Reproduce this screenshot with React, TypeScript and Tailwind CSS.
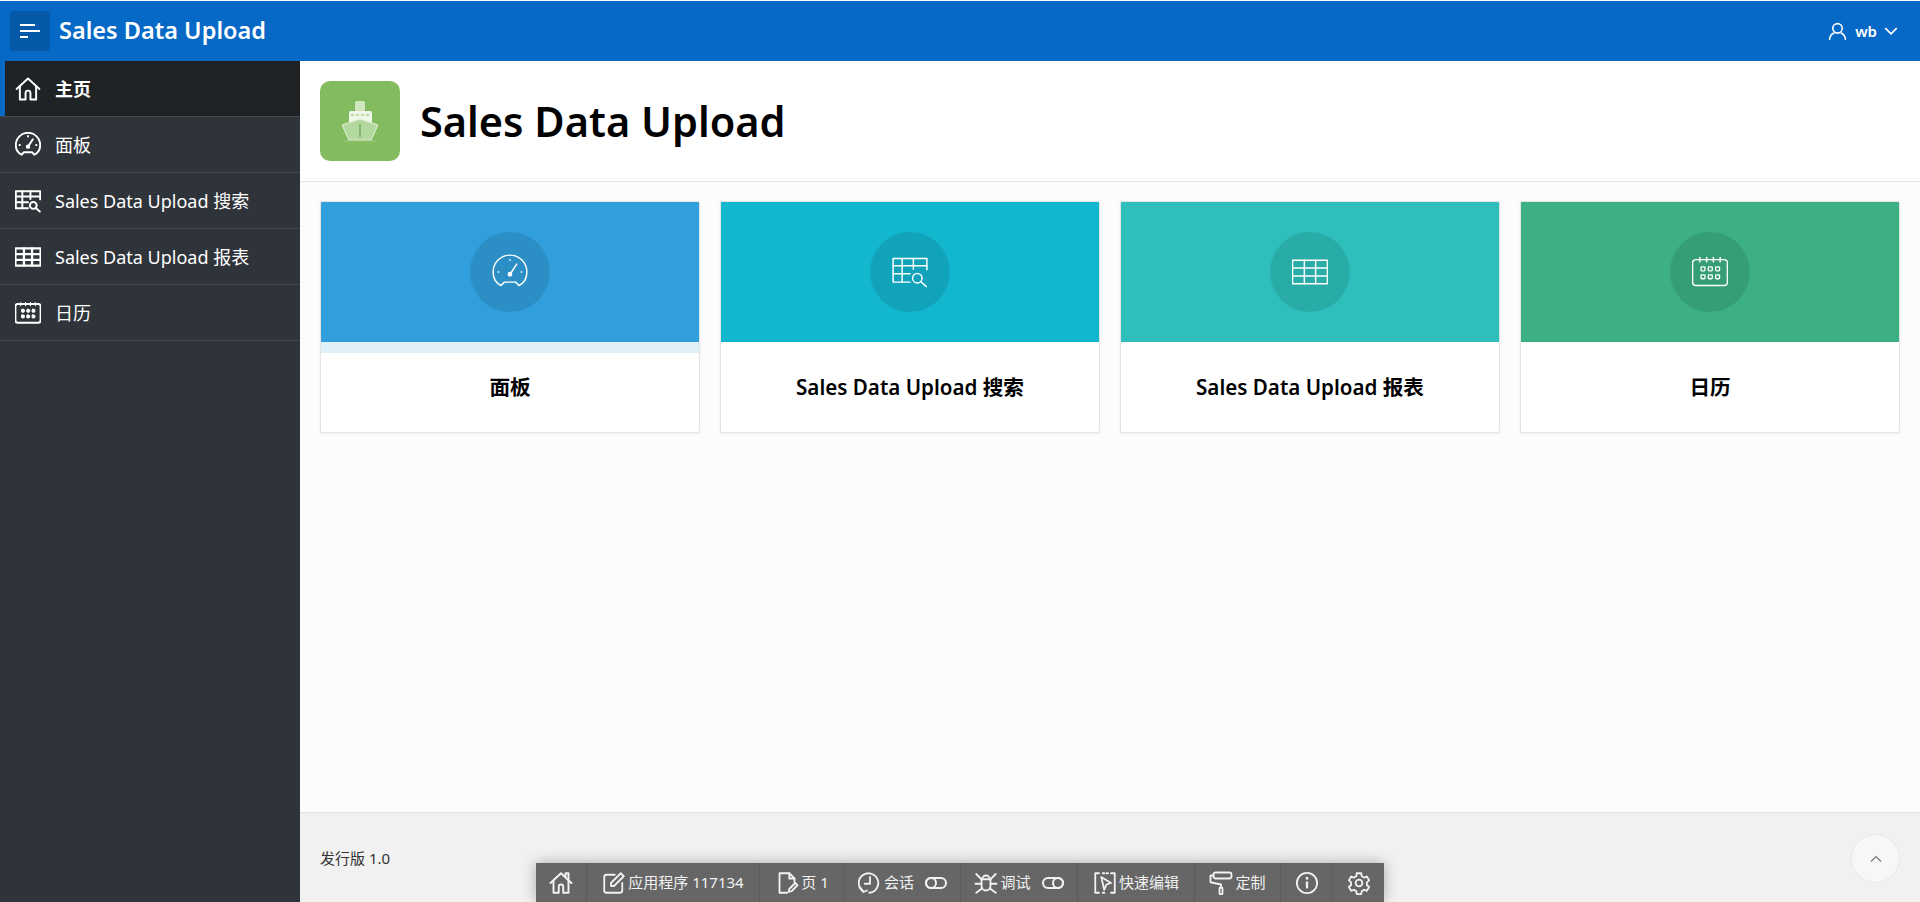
import type { ReactNode } from "react"

const FONT = "font-['Noto_Sans','Noto_Sans_CJK_SC',sans-serif]"

function Svg({ size, sw = 2, children }: { size: number; sw?: number; children: ReactNode }) {
    return (
        <svg
            width={size}
            height={size}
            viewBox="0 0 32 32"
            fill="none"
            stroke="currentColor"
            strokeWidth={sw}
            strokeLinecap="round"
            strokeLinejoin="round"
        >
            {children}
        </svg>
    )
}

interface IconProps {
    size?: number
    sw?: number
}

function HomeIcon({ size = 32, sw, chimney = false }: IconProps & { chimney?: boolean }) {
    return (
        <Svg size={size} sw={sw}>
            <path d="M2 16 16 3l14 13" />
            <path d="M6 13v16h7v-8a3 3 0 0 1 6 0v8h7V13" />
            {chimney && <path d="M22 7V3h4v8" />}
        </Svg>
    )
}

function GaugeIcon({ size = 32, sw }: IconProps) {
    return (
        <Svg size={size} sw={sw}>
            <path d="M8 28C3 25.500 1 21 1 16a15 15 0 0 1 30 0c0 5-2 9.500-7 12l-3-3H11z" />
            <path d="M16 18l6-9" />
            <circle cx="16" cy="18" r="1.500" fill="currentColor" />
            <path d="M16 5v.5M5.500 16h.5M26 16h.5" />
        </Svg>
    )
}

function TableSearchIcon({ size = 32, sw }: IconProps) {
    return (
        <Svg size={size} sw={sw}>
            <path d="M16 25H1V4h30v10" />
            <path d="M1 10.500h30M1 17.500h15M9 4v21M19 4v9.500" />
            <circle cx="22.500" cy="21.500" r="4.200" />
            <path d="m25.500 24.500 5 4.500" />
        </Svg>
    )
}

function TableIcon({ size = 32, sw }: IconProps) {
    return (
        <Svg size={size} sw={sw}>
            <path d="M0.500 5.500h31v21h-31z" />
            <path d="M0.500 12.500h31M0.500 19.500h31M11 5.500v21M21 5.500v21" />
        </Svg>
    )
}

function CalendarIcon({ size = 32, sw, solid = false }: IconProps & { solid?: boolean }) {
    return (
        <Svg size={size} sw={sw}>
            <rect x="0.500" y="5" width="31" height="23" rx="3" />
            <path d="M7 3v4M13 3v4M19 3v4M25 3v4" strokeWidth={1.300} />
            {[8, 14.500, 21].map((x) =>
                [11.500, 18.500].map((y) => (
                    <rect
                        key={`${x}-${y}`}
                        x={x}
                        y={y}
                        width="3.500"
                        height="3.500"
                        rx="0.700"
                        strokeWidth={1.200}
                        fill={solid ? "currentColor" : "none"}
                    />
                ))
            )}
        </Svg>
    )
}

function ShipIcon() {
    return (
        <svg width="36" height="41" viewBox="0 0 36 41" fill="none">
            <rect x="13" y="0" width="10" height="11" rx="2" fill="#cfe6bf" />
            <rect x="7" y="10" width="23" height="12" rx="1.500" fill="#eef7e8" />
            <path d="M9 14h3M14 14h3M19 14h3M24 14h3" stroke="#82bc5f" strokeWidth="1" />
            <path d="M0 24 18 18 36 24 29 39H7z" fill="#b4d9a0" stroke="#e4f1db" strokeWidth="1" />
            <path d="M18 23v13" stroke="#7fae62" strokeWidth="1.500" />
            <path d="M2 40h32" stroke="#a3cd8b" strokeWidth="1" />
        </svg>
    )
}

const navItems = [
    { label: "主页", icon: <HomeIcon size={26} sw={2.400} />, active: true },
    { label: "面板", icon: <GaugeIcon size={26} sw={2.400} /> },
    { label: "Sales Data Upload 搜索", icon: <TableSearchIcon size={26} sw={2.400} /> },
    { label: "Sales Data Upload 报表", icon: <TableIcon size={26} sw={2.800} /> },
    { label: "日历", icon: <CalendarIcon size={26} sw={2.400} solid /> },
]

const cards = [
    { label: "面板", bg: "bg-[#309fdb]", icon: <GaugeIcon size={36} sw={1.300} />, focused: true },
    { label: "Sales Data Upload 搜索", bg: "bg-[#13b6cf]", icon: <TableSearchIcon size={36} sw={1.300} /> },
    { label: "Sales Data Upload 报表", bg: "bg-[#2ebfbc]", icon: <TableIcon size={36} sw={1.300} /> },
    { label: "日历", bg: "bg-[#3cb083]", icon: <CalendarIcon size={36} sw={1.300} /> },
]

function Toggle({ on }: { on?: boolean }) {
    return (
        <span className={`ml-[9px] flex h-[12px] w-[22px] items-center rounded-full border-2 border-[#f2f2f2] ${on ? "justify-end" : ""}`}>
            <span className={`h-[12px] w-[12px] shrink-0 rounded-full border-2 border-[#f2f2f2] ${on ? "-mr-[2px]" : "-ml-[2px]"}`} />
        </span>
    )
}

const toolbarItems = [
    {
        w: "w-[51px]",
        icon: <HomeIcon size={24} sw={2.600} chimney />,
    },
    {
        w: "w-[173px]",
        label: "应用程序 117134",
        icon: (
            <Svg size={24} sw={2.400}>
                <path d="M27 16v10a3 3 0 0 1-3 3H6a3 3 0 0 1-3-3V8a3 3 0 0 1 3-3h11" />
                <path d="M12 20v-4L25 3l4 4-13 13z" />
            </Svg>
        ),
    },
    {
        w: "w-[85px]",
        label: "页 1",
        icon: (
            <Svg size={24} sw={2.400}>
                <path d="M16 29H6V3h13l7 7v5" />
                <path d="M19 3v7h7" />
                <path d="m18 28 1-4 8-8 3 3-8 8z" />
            </Svg>
        ),
    },
    {
        w: "w-[116px]",
        label: "会话",
        toggle: "off",
        icon: (
            <Svg size={24} sw={2.400}>
                <path d="M7 27A13 13 0 1 1 15 29" />
                <path d="M16 8v9h-7" />
                <path d="M3 22l4 6 5-2" />
            </Svg>
        ),
    },
    {
        w: "w-[117px]",
        label: "调试",
        toggle: "on",
        icon: (
            <Svg size={24} sw={2.400}>
                <path d="M10 11h12v9a6 6 0 0 1-12 0z" />
                <path d="M3 4l7 7M29 4l-7 7M2 17h8M30 17h-8M3 29l8-6M29 29l-8-6M11 11a5 5 0 0 1 10 0" />
            </Svg>
        ),
    },
    {
        w: "w-[117px]",
        label: "快速编辑",
        icon: (
            <Svg size={24} sw={2.400}>
                <path d="M8 3H3v26h5M24 3h5v26h-5M13 3h2M18 3h2M13 29h2" />
                <path d="m11 8 4 17 3-7 6-2z" />
            </Svg>
        ),
    },
    {
        w: "w-[86px]",
        label: "定制",
        icon: (
            <Svg size={24} sw={2.400}>
                <rect x="6" y="2" width="24" height="8" rx="3" />
                <path d="M6 6H2v9l14 3v4" />
                <rect x="14" y="22" width="4" height="9" rx="1.500" />
            </Svg>
        ),
    },
    {
        w: "w-[52px]",
        icon: (
            <Svg size={24} sw={2.400}>
                <circle cx="16" cy="16" r="13.500" />
                <path d="M16 15v7" strokeWidth={3} />
                <path d="M16 9.500v.5" strokeWidth={3.500} />
            </Svg>
        ),
    },
    {
        w: "w-[51px]",
        icon: (
            <Svg size={24} sw={2.400}>
                <circle cx="16" cy="16" r="4.500" />
                <path d="m13 3-.7 4a10 10 0 0 0-3 1.800L5.500 7.300l-3 5.200 3 2.600a10 10 0 0 0 0 3.600l-3 2.600 3 5.200 3.800-1.500a10 10 0 0 0 3 1.800l.7 4h6l.7-4a10 10 0 0 0 3-1.800l3.800 1.500 3-5.200-3-2.600a10 10 0 0 0 0-3.600l3-2.600-3-5.200-3.800 1.500a10 10 0 0 0-3-1.800L19 3z" />
            </Svg>
        ),
    },
]

export default function App() {
    return (
        <div className={`${FONT} relative flex h-[902px] flex-col overflow-hidden bg-white pt-px text-black`}>
            <header className="flex h-[60px] shrink-0 items-center justify-between bg-[#0669c6] pl-[10px] pr-[21px] text-white">
                <div className="flex items-center">
                    <button className="flex h-10 w-10 flex-col items-start justify-center gap-[4px] rounded-[3px] bg-[#0559a8] pl-[10px]">
                        <span className="h-[2px] w-[15px] bg-white" />
                        <span className="h-[2px] w-[20px] bg-white" />
                        <span className="h-[2px] w-[8px] bg-white" />
                    </button>
                    <span className="ml-[9px] text-[23.5px] font-semibold leading-none">Sales Data Upload</span>
                </div>
                <div className="flex items-center text-[15px] font-semibold">
                    <svg width="19" height="19" viewBox="0 0 18 18" fill="none" stroke="currentColor" strokeWidth="1.500">
                        <circle cx="9" cy="6" r="4.500" />
                        <path d="M1.500 17c0-4 2.500-6.500 4.500-6.500M16.500 17c0-4-2.500-6.500-4.500-6.500" />
                    </svg>
                    <span className="ml-[8px]">wb</span>
                    <svg className="ml-[6px]" width="16" height="16" viewBox="0 0 14 14" fill="none" stroke="currentColor" strokeWidth="1.500">
                        <path d="m2 4.500 5 5 5-5" />
                    </svg>
                </div>
            </header>
            <div className="flex min-h-0 flex-1">
                <aside className="w-[300px] shrink-0 bg-[#2f343a] text-white">
                    {navItems.map((item) => (
                        <div
                            key={item.label}
                            className={`flex h-[56px] items-center border-b border-[#44484d] pl-[15px] text-[18px] ${
                                item.active ? "bg-[#1f2326] font-bold shadow-[inset_5px_0_0_#0669c6]" : ""
                            }`}
                        >
                            {item.icon}
                            <span className="ml-[14px] pt-[2px]">{item.label}</span>
                        </div>
                    ))}
                </aside>
                <main className="flex min-w-0 flex-1 flex-col bg-[#fcfcfc]">
                    <div className="flex h-[121px] shrink-0 items-center gap-5 border-b border-[#e4e4e4] bg-white px-5">
                        <div className="flex h-20 w-20 items-center justify-center rounded-[10px] bg-[#82bc5f]">
                            <ShipIcon />
                        </div>
                        <h1 className="pt-[2px] text-[41.5px] font-semibold leading-none">Sales Data Upload</h1>
                    </div>
                    <div className="grid flex-1 grid-cols-4 content-start gap-5 px-5 pb-5 pt-[19px]">
                        {cards.map((card) => (
                            <div
                                key={card.label}
                                className="h-[232px] overflow-hidden rounded-[2px] border border-[#e4e4e4] bg-white shadow-[0_1px_3px_rgba(0,0,0,0.06)]"
                            >
                                <div className={`flex h-[140px] items-center justify-center text-white ${card.bg}`}>
                                    <div className="flex h-20 w-20 items-center justify-center rounded-full bg-black/10">
                                        {card.icon}
                                    </div>
                                </div>
                                <div className="flex h-[90px] flex-col">
                                    {card.focused && <div className="h-[11px] shrink-0 bg-[#e0f0f9]" />}
                                    <div className={`flex flex-1 items-center justify-center text-[20.6px] font-semibold ${card.focused ? "pb-[11px]" : ""}`}>
                                        {card.label}
                                    </div>
                                </div>
                            </div>
                        ))}
                    </div>
                    <footer className="flex h-[90px] shrink-0 items-center justify-between border-t border-[#e4e4e4] bg-[#f1f1f1] pl-5 pr-5 text-[15px] text-[#333]">
                        <span className="mt-[2px]">发行版 1.0</span>
                        <button className="mt-[2px] flex h-[49px] w-[49px] items-center justify-center rounded-full border border-[#e8e8e8] bg-[#f7f7f7] text-[#777]">
                            <svg width="14" height="14" viewBox="0 0 14 14" fill="none" stroke="currentColor" strokeWidth="1.200">
                                <path d="m2 9.500 5-5 5 5" />
                            </svg>
                        </button>
                    </footer>
                </main>
            </div>
            <div className="absolute bottom-0 left-[536px] flex h-[39px] bg-[#666] text-[15px] text-[#f2f2f2] shadow-[0_0_14px_rgba(0,0,0,0.3)]">
                {toolbarItems.map((item, i) => (
                    <div
                        key={i}
                        className={`flex ${item.w} items-center justify-center gap-[2px] border-r border-[#5c5c5c] last:border-r-0`}
                    >
                        {item.icon}
                        {item.label && <span>{item.label}</span>}
                        {item.toggle && <Toggle on={item.toggle === "on"} />}
                    </div>
                ))}
            </div>
        </div>
    )
}
